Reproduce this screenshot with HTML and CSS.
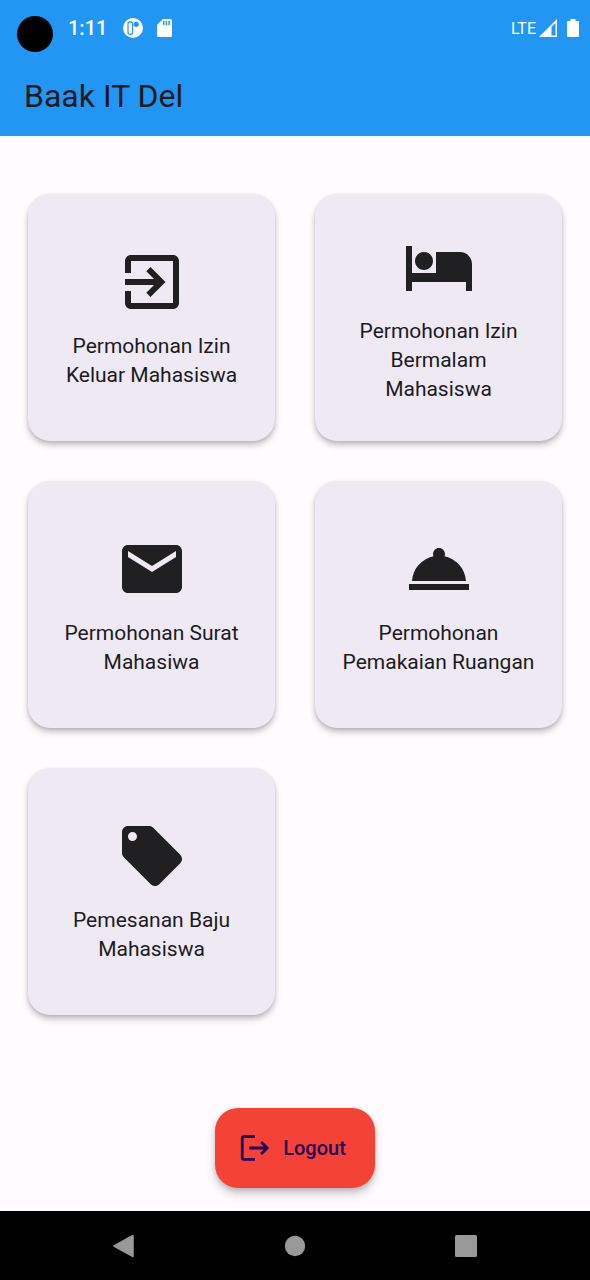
FILE: index.html
```html
<!DOCTYPE html>
<html lang="id">
<head>
<meta charset="utf-8">
<meta name="viewport" content="width=device-width, initial-scale=1">
<title>Baak IT Del</title>
<link rel="stylesheet" href="styles.css">
</head>
<body>
<div class="screen">
  <header class="top">
    <div class="status">
      <span class="camera"></span>
      <span class="clock">1:11</span>
      <svg class="status-app" viewBox="0 0 20 20" aria-hidden="true">
        <circle cx="10" cy="10" r="10" fill="#fff"/>
        <rect x="5" y="3.800" width="4.600" height="12.600" rx="2.200" fill="#fff" stroke="#2196f3" stroke-width="1.200"/>
        <circle cx="13.200" cy="6.300" r="2.600" fill="#2196f3"/>
      </svg>
      <svg class="status-sd" viewBox="0 0 16 20" aria-hidden="true">
        <path fill="#fff" d="M6 1h7.500q1.500 0 1.500 1.500v15q0 1.500-1.500 1.500h-12q-1.500 0-1.500-1.500V7z"/>
        <path fill="#2196f3" d="M6 3h1.500v4H6zM8.700 3h1.500v4H8.700zM11.400 3h1.500v4h-1.500z"/>
      </svg>
      <span class="network">LTE</span>
      <svg class="status-signal" viewBox="0 0 18 18" aria-hidden="true">
        <path fill="#fff" fill-rule="evenodd" d="M18 0v18H0zM16.500 4L12.500 8v8.500h4z"/>
      </svg>
      <svg class="status-battery" viewBox="0 0 12 20" aria-hidden="true">
        <path fill="#fff" d="M3.500 1h5v2H11q1 0 1 1v14q0 1-1 1H1q-1 0-1-1V4q0-1 1-1h2.500z"/>
      </svg>
    </div>
    <h1 class="title">Baak IT Del</h1>
  </header>

  <main class="content">
    <div class="menu">
      <button class="card" type="button">
        <svg class="card-icon" viewBox="0 0 24 24" aria-hidden="true"><path d="M10.090 15.590L11.500 17l5-5-5-5-1.410 1.410L12.670 11H3v2h9.670l-2.580 2.590zM19 3H5c-1.110 0-2 .9-2 2v4h2V5h14v14H5v-4H3v4c0 1.100.890 2 2 2h14c1.100 0 2-.9 2-2V5c0-1.100-.9-2-2-2z"/></svg>
        <span class="card-label">Permohonan Izin Keluar Mahasiswa</span>
      </button>
      <button class="card" type="button">
        <svg class="card-icon" viewBox="0 0 24 24" aria-hidden="true"><path d="M7 13c1.660 0 3-1.340 3-3S8.660 7 7 7s-3 1.340-3 3 1.340 3 3 3zm12-6h-8v7H3V5H1v15h2v-3h18v3h2v-9c0-2.210-1.790-4-4-4z"/></svg>
        <span class="card-label">Permohonan Izin Bermalam Mahasiswa</span>
      </button>
      <button class="card" type="button">
        <svg class="card-icon" viewBox="0 0 24 24" aria-hidden="true"><path d="M20 4H4c-1.100 0-1.990.9-1.990 2L2 18c0 1.100.9 2 2 2h16c1.100 0 2-.9 2-2V6c0-1.100-.9-2-2-2zm0 4l-8 5-8-5V6l8 5 8-5v2z"/></svg>
        <span class="card-label">Permohonan Surat Mahasiwa</span>
      </button>
      <button class="card" type="button">
        <svg class="card-icon" viewBox="0 0 24 24" aria-hidden="true"><path d="M2 17h20v2H2zm11.840-9.210c.1-.24.160-.510.160-.790 0-1.100-.9-2-2-2s-2 .9-2 2c0 .280.060.550.160.790C6.250 8.600 3.270 11.930 3 16h18c-.270-4.070-3.250-7.400-7.160-8.210z"/></svg>
        <span class="card-label">Permohonan Pemakaian Ruangan</span>
      </button>
      <button class="card" type="button">
        <svg class="card-icon" viewBox="0 0 24 24" aria-hidden="true"><path d="M21.410 11.580l-9-9C12.050 2.220 11.550 2 11 2H4c-1.100 0-2 .9-2 2v7c0 .550.220 1.050.590 1.420l9 9c.360.360.860.580 1.410.580.550 0 1.050-.220 1.410-.590l7-7c.370-.360.590-.860.590-1.410 0-.550-.230-1.060-.590-1.420zM5.500 7C4.670 7 4 6.330 4 5.500S4.670 4 5.500 4 7 4.670 7 5.500 6.330 7 5.500 7z"/></svg>
        <span class="card-label">Pemesanan Baju Mahasiswa</span>
      </button>
    </div>
    <button class="logout" type="button">
      <svg class="logout-icon" viewBox="0 0 24 24" aria-hidden="true"><path d="M17 7l-1.410 1.410L18.170 11H8v2h10.170l-2.580 2.580L17 17l5-5zM4 5h8V3H4c-1.100 0-2 .9-2 2v14c0 1.100.9 2 2 2h8v-2H4V5z"/></svg>
      <span>Logout</span>
    </button>
  </main>

  <nav class="system-nav" aria-label="Navigasi sistem">
    <button class="nav-button" type="button" aria-label="Kembali">
      <svg class="nav-icon" viewBox="0 0 24 24" aria-hidden="true"><path d="M2 12L21 1.500V22.500z" stroke="#999" stroke-width="1.500" stroke-linejoin="round"/></svg>
    </button>
    <button class="nav-button" type="button" aria-label="Beranda">
      <svg class="nav-icon" viewBox="0 0 24 24" aria-hidden="true"><circle cx="12" cy="12" r="10.200"/></svg>
    </button>
    <button class="nav-button" type="button" aria-label="Terbaru">
      <svg class="nav-icon" viewBox="0 0 24 24" aria-hidden="true"><rect x="1" y="1" width="22" height="22" rx="1.500"/></svg>
    </button>
  </nav>
</div>
</body>
</html>
```

FILE: styles.css
```css
* {
  box-sizing: border-box;
}

body {
  margin: 0;
  background: #fffbff;
  color: #1c1b1f;
  font-family: Roboto, "Liberation Sans", sans-serif;
}

button {
  border: 0;
  padding: 0;
  color: inherit;
  font: inherit;
  cursor: pointer;
}

.screen {
  display: flex;
  flex-direction: column;
  min-height: 100vh;
}

.top {
  background: #2196f3;
  padding-bottom: 20px;
}

.status {
  display: flex;
  align-items: center;
  height: 56px;
  padding: 0 11px 0 17px;
  color: #fff;
}

.camera {
  width: 36px;
  height: 36px;
  margin-top: 12px;
  margin-right: 15px;
  border-radius: 50%;
  background: #000;
}

.clock {
  font-size: 20px;
  font-weight: 500;
}

.status-app {
  width: 20px;
  height: 20px;
  margin-left: 16px;
}

.status-sd {
  width: 16px;
  height: 20px;
  margin-left: 14px;
}

.network {
  margin-left: auto;
  font-size: 16px;
}

.status-signal {
  width: 18px;
  height: 18px;
  margin-left: 3px;
}

.status-battery {
  width: 12px;
  height: 20px;
  margin-left: 10px;
}

.title {
  margin: 0;
  padding: 20px 24px 0;
  font-size: 32px;
  font-weight: 400;
  line-height: 40px;
}

.content {
  flex: 1;
  display: flex;
  flex-direction: column;
  justify-content: space-between;
  align-items: center;
  gap: 40px;
  padding: 58px 28px 23px;
}

.menu {
  display: grid;
  grid-template-columns: 1fr 1fr;
  gap: 40px;
  width: 100%;
}

.card {
  display: flex;
  flex-direction: column;
  align-items: center;
  justify-content: center;
  gap: 14px;
  aspect-ratio: 1;
  padding: 0 24px;
  border-radius: 22px;
  background: #eee9f3;
  box-shadow: 0 4px 6px rgba(0, 0, 0, 0.24), 0 1px 3px rgba(0, 0, 0, 0.1);
}

.card-icon {
  flex: none;
  width: 72px;
  height: 72px;
  fill: #202022;
}

.card-label {
  font-size: 21px;
  line-height: 29px;
  text-align: center;
}

.logout {
  display: flex;
  align-items: center;
  gap: 11px;
  height: 80px;
  padding: 0 29px 0 23px;
  border-radius: 23px;
  background: #f44336;
  box-shadow: 0 6px 10px rgba(0, 0, 0, 0.2), 0 2px 4px rgba(0, 0, 0, 0.12);
  color: #21005d;
  font-size: 20px;
  font-weight: 500;
}

.logout-icon {
  width: 34px;
  height: 34px;
  fill: currentColor;
}

.system-nav {
  display: flex;
  justify-content: center;
  height: 69px;
  padding: 0 38px;
  background: #000;
}

.nav-button {
  display: flex;
  flex: 1;
  align-items: center;
  justify-content: center;
  background: none;
}

.nav-icon {
  width: 24px;
  height: 24px;
  fill: #999;
}
```
